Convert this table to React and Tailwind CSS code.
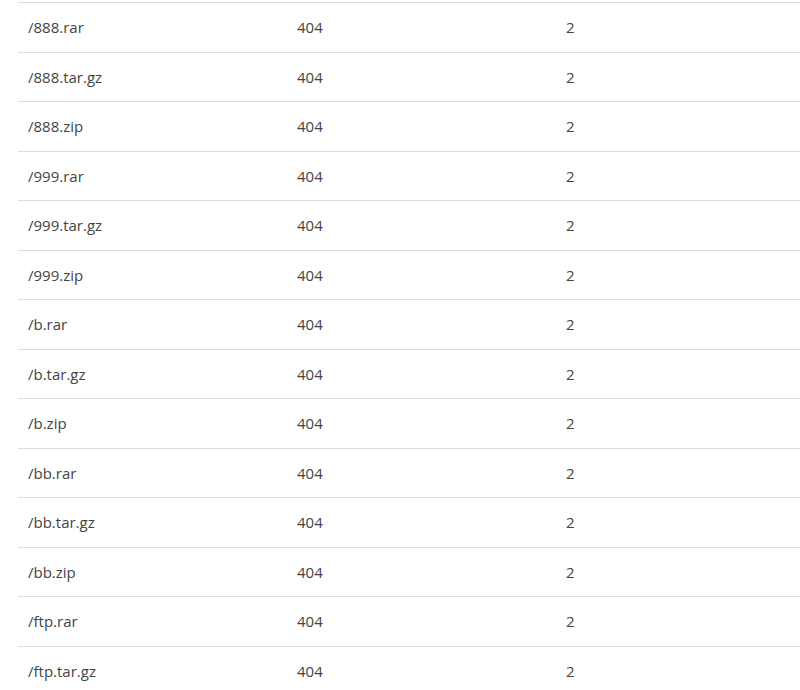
const rows = [
  '/888.rar',
  '/888.tar.gz',
  '/888.zip',
  '/999.rar',
  '/999.tar.gz',
  '/999.zip',
  '/b.rar',
  '/b.tar.gz',
  '/b.zip',
  '/bb.rar',
  '/bb.tar.gz',
  '/bb.zip',
  '/ftp.rar',
  '/ftp.tar.gz',
]

export default function App() {
  return (
    <div className="h-[690px] w-[800px] overflow-hidden bg-white pt-[2px]" style={{ fontFamily: '"Open Sans", "Noto Sans", sans-serif' }}>
      <div className="ml-[18px] w-[810px]">
        {rows.map((path) => (
          <div key={path} className="grid h-[49.5px] grid-cols-[269px_269px_1fr] items-center border-t border-[#dedede] text-[15px] text-[#444]">
            <div className="pl-[10px]">{path}</div>
            <div className="pl-[10px]">404</div>
            <div className="pl-[10px]">2</div>
          </div>
        ))}
      </div>
    </div>
  )
}
